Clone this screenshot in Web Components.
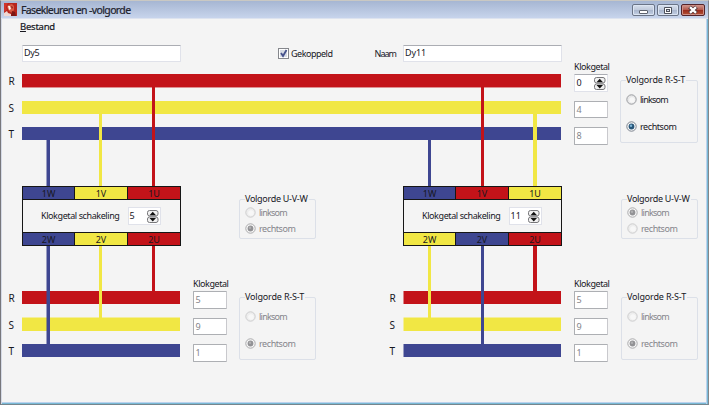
<!DOCTYPE html>
<html lang="nl">
<head>
<meta charset="utf-8">
<title>Fasekleuren en -volgorde</title>
<style>
html,body{margin:0;width:709px;height:405px;overflow:hidden;background:#f4f4f4}
body{font:9px/12px "Noto Sans","Open Sans",sans-serif;color:#17171f}
.row{display:flex;align-items:flex-start}
.fields{height:17px;padding:9px 0 0 20px}
.fields fit-text{margin-top:3px}
.supply{height:124px}
.blocks{height:60px;padding-left:20px}
.load{height:145px}
</style>
</head>
<body>
<app-window>
  <title-bar></title-bar>
  <menu-bar></menu-bar>
  <div class="row fields">
    <text-field value="Dy5" w="15.5"></text-field>
    <check-box style="margin-left:97px" label="Gekoppeld" w="41.5"></check-box>
    <fit-text style="margin-left:42px" w="21.5">Naam</fit-text>
    <text-field style="margin-left:7px" value="Dy11" w="21"></text-field>
  </div>
  <div class="row supply">
    <phase-names style="padding-top:12px"></phase-names>
    <phase-wiring style="margin-top:12px" kind="supply"></phase-wiring>
    <clock-column style="margin-left:12px" values="0,4,8" spin></clock-column>
    <radio-group style="margin:13px 0 0 12px" w="78" h="68" legend="Volgorde R-S-T" lw="59" selected="2" active></radio-group>
  </div>
  <div class="row blocks">
    <coil-block colors="b,y,r" out="b,y,r" value="5"></coil-block>
    <radio-group style="margin:8px 0 0 58px" w="77" h="45" legend="Volgorde U-V-W" lw="62.5" selected="2" compact></radio-group>
    <coil-block style="margin-left:87px" colors="b,r,y" out="y,b,r" value="11"></coil-block>
    <radio-group style="margin:8px 0 0 59px" w="77" h="45" legend="Volgorde U-V-W" lw="62.5" selected="1" compact></radio-group>
  </div>
  <div class="row load">
    <phase-names style="padding-top:45px"></phase-names>
    <phase-wiring kind="left"></phase-wiring>
    <clock-column style="margin:33px 0 0 12px" values="5,9,1"></clock-column>
    <radio-group style="margin:46px 0 0 12px" w="77" h="68" legend="Volgorde R-S-T" lw="59" selected="2"></radio-group>
    <phase-names style="padding-top:45px;margin-left:67px"></phase-names>
    <phase-wiring kind="right"></phase-wiring>
    <clock-column style="margin:33px 0 0 12px" values="5,9,1"></clock-column>
    <radio-group style="margin:46px 0 0 13px" w="77" h="68" legend="Volgorde R-S-T" lw="59" selected="2"></radio-group>
  </div>
</app-window>
<script>
const COLOR = {r:'#c31319', y:'#f1e744', b:'#3e4691'};
class Base extends HTMLElement {
  connectedCallback(){
    if(this.shadowRoot) return;
    this.attachShadow({mode:'open'}).innerHTML = '<style>*{box-sizing:border-box}'+this.css()+'</style>'+this.html();
    this.ready();
  }
  a(n){return this.getAttribute(n)}
  css(){return ''} html(){return '<slot></slot>'} ready(){}
}
const def = (n,c)=>customElements.define(n,c);

/* Text set to an exact width by adjusting its tracking. */
def('fit-text', class extends Base{
  css(){return ':host{display:block;white-space:nowrap;width:max-content}span{display:inline-block}'}
  html(){return '<span><slot></slot></span>'}
  ready(){
    const s=this.shadowRoot.querySelector('span'), w=parseFloat(this.a('w'));
    const n=s.getBoundingClientRect().width, len=this.textContent.length;
    if(w&&n) s.style.letterSpacing=((w-n)/len)+'px';
    this.style.width=w+'px';
  }
});
def('app-window', class extends Base{
  css(){return `:host{display:flex;flex-direction:column;box-sizing:border-box;width:709px;height:405px;overflow:hidden;background:#f4f4f4;
    border:1px solid #77777c;border-top-color:#c9c8c3;border-right-color:#83868b;border-bottom-color:#77868e;padding:0 0 0 1px;
    box-shadow:inset 1px 0 #d5dae6,inset -1px 0 #78b9d4,inset -2px 0 #bcd2ee,inset 0 -1px #78b9d4,inset 0 -2px #bcd2ee}`}
});
def('title-bar', class extends Base{
  css(){return `:host{display:flex;align-items:flex-start;flex:none;height:18px;margin-left:-1px;background:linear-gradient(#a6b6d2,#c7d4ec 94%,#dde3ef 95%);
    font-size:10.5px;line-height:17px;padding-left:3px;color:#20222c}
    .ico{margin-top:2px;flex:none}fit-text{margin:1px auto 0 4px;-webkit-text-stroke:.2px}
    .b{width:23px;height:12px;border:1px solid #6a7487;border-radius:2px;margin:3px 2px 0 0;background:linear-gradient(#d8e0ed,#c0cadc 48%,#a9b6cd 52%,#c3d0e5);box-shadow:inset 0 0 0 1px #dce5f3;display:flex}
    .b.m{width:22px;margin-right:2px}
    .b.x{width:24px;margin-right:3px;border-color:#54242a;background:linear-gradient(#d09a91,#b4574a 48%,#9a2b1d 52%,#b55336);box-shadow:inset 0 0 0 1px #cf9087}.b svg{margin:auto}`}
  html(){return `<svg class="ico" width="13" height="13"><rect width="13" height="13" fill="#b7251c"/><path d="M0 0H4L2 4L3 7L0 9Z" fill="#cf352b"/><path d="M4 2L8 1L10 3L10 7L8 10L5 8L3 4Z" fill="#d75a43"/><path d="M4 3L6 3L7 6L5 7Z" fill="#fff0e5"/><path d="M0 10L3 8L4 10L7 11L7 13H0Z" fill="#f0d8d2"/><path d="M8 8L11 9L12 13H7Z" fill="#7c1715"/><path d="M7 3L9 4L8 6Z" fill="#871c18"/></svg>
    <fit-text w="109.5">Fasekleuren en -volgorde</fit-text>
    <div class="b"><svg width="21" height="10"><rect x="6.5" y="5.5" width="8" height="3" rx=".5" fill="#fff" stroke="#5d626e"/></svg></div>
    <div class="b m"><svg width="20" height="10"><rect x="6" y="2" width="8" height="7" rx="1" fill="#4c505b"/><rect x="7" y="3" width="6" height="5" fill="#fff"/><rect x="8" y="4" width="4" height="3" fill="#4c505b"/><rect x="9" y="5" width="2" height="1" fill="#dbe1ec"/></svg></div>
    <div class="b x"><svg width="22" height="10"><path d="M7.5 2L14.5 8M14.5 2L7.5 8" stroke="#54383c" stroke-width="4"/><path d="M8 2.2L14 7.8M14 2.2L8 7.8" stroke="#fff" stroke-width="2.3"/></svg></div>`}
});
def('menu-bar', class extends Base{
  css(){return ':host{display:block;box-sizing:border-box;flex:none;height:17px;padding:3px 0 0 18px;font-size:9.5px;line-height:10px;-webkit-text-stroke:.2px}u{text-underline-offset:1px}'}
  html(){return '<fit-text w="35"><u>B</u>estand</fit-text>'}
});
def('text-field', class extends Base{
  css(){return ':host{display:block;box-sizing:border-box;flex:none;width:159px;height:17px;border:1px solid #e0e2ea;border-top-color:#abadb3;border-radius:1px;background:#fff;padding:1px 0 0 0}'}
  html(){return `<fit-text w="${this.a('w')}">${this.a('value')}</fit-text>`}
  ready(){this.shadowRoot.querySelector('fit-text').style.marginLeft='1px'}
});
def('check-box', class extends Base{
  css(){return ':host{display:flex;gap:2px;flex:none}svg{margin-top:3px}fit-text{margin-top:3px}'}
  html(){return `<svg width="11" height="11"><rect x=".5" y=".5" width="10" height="10" fill="#fff" stroke="#85878c"/><rect x="2" y="2" width="7" height="7" fill="#d7dce5"/><path d="M3 5L5 8L8.5 2" fill="none" stroke="#46528c" stroke-width="1.8"/></svg><fit-text w="${this.a('w')}">${this.a('label')}</fit-text>`}
});
def('phase-names', class extends Base{
  css(){return ':host{display:flex;flex-direction:column;gap:13.5px;flex:none;width:20px;box-sizing:border-box;padding-left:6.5px;font-size:10px}span{height:13px;line-height:14px}'}
  html(){return '<span>R</span><span>S</span><span>T</span>'}
});
/* Bus bars with the wires that connect them to the coil blocks. */
def('phase-wiring', class extends Base{
  css(){return ':host{display:block;flex:none}svg{display:block}'}
  html(){
    const R=(x,y,w,h,c,o)=>`<rect x="${x}" y="${y}" width="${w}" height="${h}" fill="${COLOR[c]}"${o?` opacity="${o}"`:''}/>`;
    let s='', w=159, h=112, k=this.a('kind');
    if(k==='supply'){ w=540;
      s=R(0,0,539,13,'r')+R(0,13,539,1,'r',.45)+R(0,27,539,13,'y')+R(0,53,539,13,'b')
       +R(24,66,1,46,'b',.5)+R(25,66,3,46,'b')+R(77,40,3,72,'y')+R(130,13,3,99,'r')
       +R(406,66,3,46,'b')+R(459,13,3,99,'r')+R(511,40,4,72,'y');
    } else if(k==='left'){
      s=R(0,45,158,13,'r')+R(0,71.5,158,13.5,'y')+R(0,98,158,13,'b')
       +R(24,0,1,98,'b',.5)+R(25,0,3,98,'b')+R(77,0,3,72,'y')+R(130,0,3,45,'r');
    } else {
      s=R(.5,45,157.5,13,'r')+R(.5,71.5,157.5,13.5,'y')+R(.5,98,157.5,13,'b')
       +R(25,0,3,72,'y')+R(78,0,3,98,'b')+R(130,0,4,45,'r');
    }
    return `<svg width="${w}" height="${h}">${s}</svg>`;
  }
});
def('spin-buttons', class extends Base{
  css(){return ':host{display:block;flex:none}svg{display:block}'}
  html(){return `<svg width="12" height="14"><rect x=".5" y=".5" width="10.5" height="5.5" rx="2" fill="#f1f1f1" stroke="#77777a"/><rect x=".5" y="7" width="10.5" height="5.5" rx="2" fill="#f1f1f1" stroke="#77777a"/><path d="M2.5 5.2L5.75 1.7L9 5.2ZM2.5 7.9L5.75 11.4L9 7.9Z" fill="#111"/></svg>`}
});
def('clock-column', class extends Base{
  css(){return `:host{display:block;flex:none;width:34px}.l{height:12px;margin-top:-1px;margin-bottom:1px}
    .v{height:17.5px;margin-bottom:9px;border:1px solid #adafb3;border-right-color:#c9c9cd;border-radius:1px;background:#fff;color:#85858b;padding:2px 0 0 1.5px;display:flex;justify-content:space-between}
    .on{color:#17171f;border-color:#abadb3 #e0e2ea #e0e2ea}spin-buttons{margin-right:1px}`}
  html(){return `<fit-text class="l" w="35.5">Klokgetal</fit-text>`+this.a('values').split(',').map((v,i)=>{
    const on=i===0&&this.hasAttribute('spin');
    return `<div class="v ${on?'on':''}"><span>${v}</span>${on?'<spin-buttons></spin-buttons>':''}</div>`}).join('')}
});
def('radio-group', class extends Base{
  css(){
    const c=this.hasAttribute('compact');
    return `:host{display:block;flex:none}
    fieldset{margin:0;min-width:0;width:${this.a('w')}px;height:${this.a('h')}px;border:1px solid #dce0e8;border-radius:2px;padding:0 0 0 5px}
    legend{padding:0 1px 0 0;height:10px;line-height:10px;margin-left:0}
    .r{display:flex;align-items:center;gap:3px;height:11px;line-height:11px;color:${this.hasAttribute('active')?'#17171f':'#85858b'}}
    .r:first-of-type{margin-top:${c?3:9}px}.r+.r{margin-top:${c?5:16}px}`}
  html(){
    const sel=+this.a('selected'), act=this.hasAttribute('active');
    const radio=i=>{const on=i===sel, st=on?(act?'#6d7682':'#a1a1a4'):(act?'#929499':'#c9c9cb');
      return `<svg width="11" height="11"><circle cx="5.5" cy="5.5" r="4.7" fill="${on?'#f8f8f8':(act?'#e7e7e8':'#ededed')}" stroke="${st}" stroke-width=".9"/>${on?`<circle cx="5.5" cy="5.5" r="2.9" fill="${act?'#285679':'#929295'}"/><circle cx="5" cy="4.8" r="1.2" fill="${act?'#7fb5d5':'#b0b0b2'}"/>`:`<circle cx="6" cy="6" r="2.8" fill="#f7f7f7"/>`}</svg>`};
    return `<fieldset><legend><fit-text w="${this.a('lw')}">${this.a('legend')}</fit-text></legend>
      <div class="r">${radio(1)}<fit-text w="28">linksom</fit-text></div><div class="r">${radio(2)}<fit-text w="36.5">rechtsom</fit-text></div></fieldset>`}
});
def('coil-block', class extends Base{
  css(){return `:host{display:grid;box-sizing:border-box;flex:none;width:159px;height:60px;border:1px solid #161616;grid-template-rows:12px 34px 12px}
    .t{display:grid;grid-template-columns:51px 52px 52px;gap:1px;background:#161616}
    .t span{text-align:center;line-height:13px;font-size:9px;height:12px}
    .m{display:flex;border:solid #161616;border-width:1px 0;padding:7px 0 0 18px}
    .m>fit-text{margin-top:3px}
    .n{margin-left:8px;width:33px;height:18px;background:#fff;border:1px solid #e0e2ea;display:flex;justify-content:space-between;padding:2px 1px 0 1px}`}
  html(){
    const t=(c,n)=>`<div class="t">${this.a(c).split(',').map((k,i)=>`<span style="background:${COLOR[k]}">${n}${'WVU'[i]}</span>`).join('')}</div>`;
    return t('colors',1)+`<div class="m"><fit-text w="78.5">Klokgetal schakeling</fit-text><div class="n"><span>${this.a('value')}</span><spin-buttons></spin-buttons></div></div>`+t('out',2)}
});
</script>
</body>
</html>
